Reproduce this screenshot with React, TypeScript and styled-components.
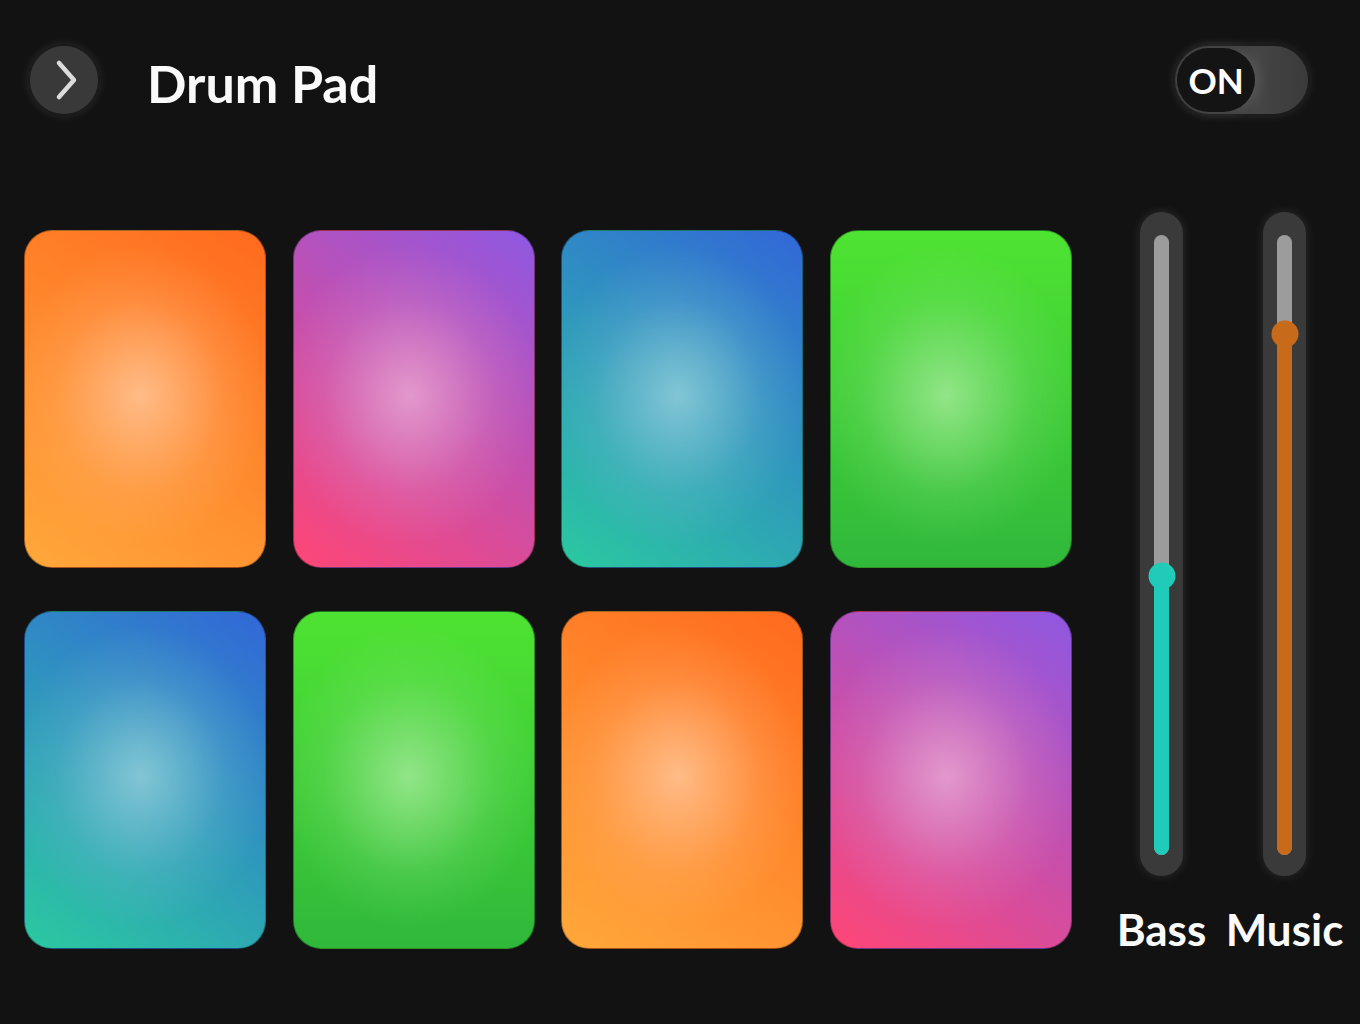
import React from "react";
import styled, { createGlobalStyle } from "styled-components";

const Global = createGlobalStyle`
  html, body { margin: 0; padding: 0; background: #121212; }
  body { font-family: "Lato", "Open Sans", sans-serif; color: #fff; }
`;

const Page = styled.div`
  width: 1360px;
  height: 1024px;
  box-sizing: border-box;
  padding: 44px 50px 0 24px;
  background: #121212;
  display: flex;
  flex-direction: column;
`;

const Header = styled.header`
  display: flex;
  align-items: center;
  height: 72px;
  padding-left: 4px;
`;

const BackButton = styled.button`
  width: 72px;
  height: 72px;
  border-radius: 50%;
  box-sizing: border-box;
  background: #393939;
  border: 2px solid #1b1b1b;
  box-shadow: 0 0 10px rgba(255, 255, 255, 0.1);
  display: flex;
  align-items: center;
  justify-content: center;
  padding: 0 0 0 4px;
  cursor: pointer;
`;

const Title = styled.h1`
  margin: 5px 0 0 47px;
  font-size: 52px;
  font-weight: 700;
  color: #fafafa;
  letter-spacing: 0;
  flex: 1;
`;

const Toggle = styled.div`
  width: 137px;
  height: 72px;
  box-sizing: border-box;
  border-radius: 36px;
  border: 2px solid #1c1c1c;
  background: linear-gradient(90deg, #3a3a3a 40%, #454545 62%, #3a3a3a 100%);
  box-shadow: 0 0 10px rgba(255, 255, 255, 0.1);
  padding: 2px;
  display: flex;
  align-items: center;
`;

const Knob = styled.div`
  width: 78px;
  height: 64px;
  border-radius: 32px;
  background: #141414;
  display: flex;
  align-items: center;
  justify-content: center;
  font-size: 35px;
  font-weight: 700;
  color: #fff;
  box-shadow: 4px 0 14px rgba(255, 255, 255, 0.12);
`;

const Main = styled.main`
  display: flex;
  align-items: flex-start;
  gap: 40px;
  margin-top: 94px;
`;

const PadGrid = styled.div`
  margin-top: 20px;
  display: grid;
  grid-template-columns: repeat(4, 242px);
  grid-auto-rows: 338px;
  column-gap: 26.5px;
  row-gap: 43px;
`;

type Tone = { tr: string; bl: string; glow: string; angle: number };

const tones: Record<string, Tone> = {
  orange: { tr: "#ff6a1e", bl: "#ffa83b", glow: "255, 190, 140", angle: 35 },
  magenta: { tr: "#8e58e2", bl: "#ff4676", glow: "228, 156, 206", angle: 35 },
  blue: { tr: "#3267d8", bl: "#2bc9a0", glow: "134, 200, 214", angle: 35 },
  green: { tr: "#4ee332", bl: "#30b83b", glow: "150, 230, 140", angle: 0 },
};

const Pad = styled.button<{ $tone: Tone }>`
  border: 1px solid rgba(0, 0, 0, 0.35);
  border-radius: 28px;
  padding: 0;
  cursor: pointer;
  background:
    radial-gradient(
      ellipse 130px 150px at 48% 49%,
      rgba(${(p) => p.$tone.glow}, 0.95) 0%,
      rgba(${(p) => p.$tone.glow}, 0.6) 30%,
      rgba(${(p) => p.$tone.glow}, 0.2) 65%,
      rgba(${(p) => p.$tone.glow}, 0) 100%
    ),
    linear-gradient(
      ${(p) => p.$tone.angle}deg,
      ${(p) => p.$tone.bl} 0%,
      ${(p) => p.$tone.tr} 100%
    );
`;

const Mixer = styled.div`
  display: flex;
  gap: 23px;
`;

const Channel = styled.div`
  width: 100px;
  display: flex;
  flex-direction: column;
  align-items: center;
`;

const Track = styled.div`
  width: 47px;
  height: 668px;
  box-sizing: border-box;
  border-radius: 24px;
  background: #3a3a3a;
  border: 2px solid #1c1c1c;
  box-shadow: 0 0 10px rgba(255, 255, 255, 0.08);
  padding: 23px 0 21px;
  display: flex;
  justify-content: center;
`;

const Rail = styled.div`
  position: relative;
  width: 15px;
  height: 100%;
  border-radius: 8px;
  background: #9c9c9c;
`;

const Fill = styled.div<{ $color: string }>`
  position: absolute;
  left: 0;
  right: 0;
  bottom: 0;
  border-radius: 8px;
  background: ${(p) => p.$color};
`;

const Thumb = styled.div<{ $color: string }>`
  position: absolute;
  left: 50%;
  top: 0;
  width: 27px;
  height: 27px;
  border-radius: 50%;
  background: ${(p) => p.$color};
  transform: translate(-50%, -50%);
`;

const Label = styled.div`
  margin-top: 25px;
  font-size: 44px;
  font-weight: 700;
  color: #fafafa;
  letter-spacing: 0;
  white-space: nowrap;
`;

const pads = [
  "orange",
  "magenta",
  "blue",
  "green",
  "blue",
  "green",
  "orange",
  "magenta",
];

const channels = [
  { name: "Bass", value: 0.45, color: "#21cbb9" },
  { name: "Music", value: 0.84, color: "#c76a1a" },
];

export default function App() {
  return (
    <>
      <Global />
      <Page>
        <Header>
          <BackButton aria-label="Back">
            <svg width="26" height="42" viewBox="0 0 26 42">
              <path
                d="M6 4 L21 21 L6 38"
                fill="none"
                stroke="#dcdcdc"
                strokeWidth="4.5"
                strokeLinecap="round"
                strokeLinejoin="round"
              />
            </svg>
          </BackButton>
          <Title>Drum Pad</Title>
          <Toggle>
            <Knob>ON</Knob>
          </Toggle>
        </Header>
        <Main>
          <PadGrid>
            {pads.map((t, i) => (
              <Pad key={i} $tone={tones[t]} aria-label={`Pad ${i + 1}`} />
            ))}
          </PadGrid>
          <Mixer>
            {channels.map((c) => (
              <Channel key={c.name}>
                <Track>
                  <Rail>
                    <Fill $color={c.color} style={{ height: `${c.value * 100}%` }} />
                    <Thumb
                      $color={c.color}
                      style={{ top: `${(1 - c.value) * 100}%` }}
                    />
                  </Rail>
                </Track>
                <Label>{c.name}</Label>
              </Channel>
            ))}
          </Mixer>
        </Main>
      </Page>
    </>
  );
}
